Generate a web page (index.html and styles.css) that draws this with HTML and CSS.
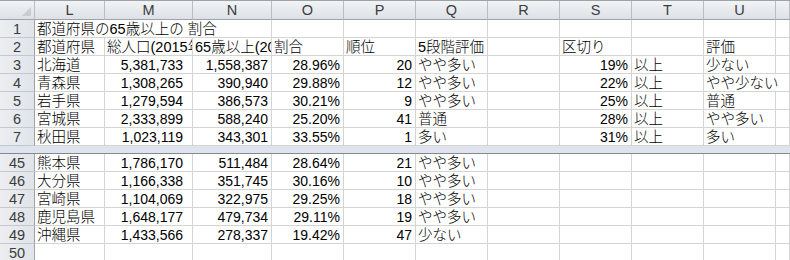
FILE: index.html
```html
<!DOCTYPE html>
<html>
<head>
<meta charset="utf-8">
<title>都道府県の65歳以上の割合</title>
<link rel="stylesheet" href="styles.css">
</head>
<body>
<div class="sheet">

  <!-- column letters -->
  <div class="grid cols">
    <div class="corner"><svg width="9" height="9" viewBox="0 0 9 9"><polygon points="9,0 9,9 0,9" fill="#c9ccd1"/></svg></div>
    <div class="ch">L</div><div class="ch">M</div><div class="ch">N</div><div class="ch">O</div><div class="ch">P</div>
    <div class="ch">Q</div><div class="ch">R</div><div class="ch">S</div><div class="ch">T</div><div class="ch">U</div><div class="ch"></div>
  </div>

  <!-- upper pane: rows 1-7 -->
  <div class="grid">
    <div class="rh">1</div>
    <div class="span3">都道府県の65歳以上の 割合</div>
    <div></div><div></div><div></div><div></div><div></div><div></div><div></div><div></div>

    <div class="rh">2</div>
    <div>都道府県</div><div class="clip">総人口(2015年)</div><div class="clip">65歳以上(2015年)</div><div>割合</div><div>順位</div>
    <div>5段階評価</div><div></div><div>区切り</div><div></div><div>評価</div><div></div>

    <div class="rh">3</div>
    <div>北海道</div><div class="n m">5,381,733</div><div class="n">1,558,387</div><div class="n">28.96%</div><div class="n">20</div>
    <div>やや多い</div><div></div><div class="n">19%</div><div>以上</div><div>少ない</div><div></div>

    <div class="rh">4</div>
    <div>青森県</div><div class="n m">1,308,265</div><div class="n">390,940</div><div class="n">29.88%</div><div class="n">12</div>
    <div>やや多い</div><div></div><div class="n">22%</div><div>以上</div><div class="span2">やや少ない</div>

    <div class="rh">5</div>
    <div>岩手県</div><div class="n m">1,279,594</div><div class="n">386,573</div><div class="n">30.21%</div><div class="n">9</div>
    <div>やや多い</div><div></div><div class="n">25%</div><div>以上</div><div>普通</div><div></div>

    <div class="rh">6</div>
    <div>宮城県</div><div class="n m">2,333,899</div><div class="n">588,240</div><div class="n">25.20%</div><div class="n">41</div>
    <div>普通</div><div></div><div class="n">28%</div><div>以上</div><div>やや多い</div><div></div>

    <div class="rh">7</div>
    <div>秋田県</div><div class="n m">1,023,119</div><div class="n">343,301</div><div class="n">33.55%</div><div class="n">1</div>
    <div>多い</div><div></div><div class="n">31%</div><div>以上</div><div>多い</div><div></div>
  </div>

  <div class="split"></div>

  <!-- lower pane: rows 45-50 -->
  <div class="grid">
    <div class="rh">45</div>
    <div>熊本県</div><div class="n m">1,786,170</div><div class="n">511,484</div><div class="n">28.64%</div><div class="n">21</div>
    <div>やや多い</div><div></div><div></div><div></div><div></div><div></div>

    <div class="rh">46</div>
    <div>大分県</div><div class="n m">1,166,338</div><div class="n">351,745</div><div class="n">30.16%</div><div class="n">10</div>
    <div>やや多い</div><div></div><div></div><div></div><div></div><div></div>

    <div class="rh">47</div>
    <div>宮崎県</div><div class="n m">1,104,069</div><div class="n">322,975</div><div class="n">29.25%</div><div class="n">18</div>
    <div>やや多い</div><div></div><div></div><div></div><div></div><div></div>

    <div class="rh">48</div>
    <div>鹿児島県</div><div class="n m">1,648,177</div><div class="n">479,734</div><div class="n">29.11%</div><div class="n">19</div>
    <div>やや多い</div><div></div><div></div><div></div><div></div><div></div>

    <div class="rh">49</div>
    <div>沖縄県</div><div class="n m">1,433,566</div><div class="n">278,337</div><div class="n">19.42%</div><div class="n">47</div>
    <div>少ない</div><div></div><div></div><div></div><div></div><div></div>

    <div class="rh">50</div>
    <div></div><div></div><div></div><div></div><div></div>
    <div></div><div></div><div></div><div></div><div></div><div></div>
  </div>

</div>
</body>
</html>
```

FILE: styles.css
```css
body {
  margin: 0;
  background: #fff;
}

.sheet {
  width: 790px;
  height: 260px;
  overflow: hidden;
  border-top: 1px solid #9ea3aa;
  font-family: "Liberation Sans", "Noto Sans CJK JP", sans-serif;
  font-size: 14.5px;
  font-weight: 300;
  color: #000;
}

.grid {
  display: grid;
  grid-template-columns: 35px 70px 88px 79px repeat(7, 72px) 14px;
  grid-auto-rows: 18px;
}

.grid > div {
  box-sizing: border-box;
  border-right: 1px solid #d4d4d4;
  border-bottom: 1px solid #d4d4d4;
  padding: 0 2px;
  line-height: 18px;
  white-space: nowrap;
}

.grid > .clip {
  overflow: hidden;
}

/* headers */
.cols {
  grid-auto-rows: 19px;
}

.cols > div {
  background: linear-gradient(#f1f3f5, #dde1e6);
  border-right: 1px solid #b9bec5;
  border-bottom: 1px solid #9ea3aa;
  line-height: 19px;
}

.ch {
  text-align: center;
  color: #3c3c3c;
}

.corner {
  display: flex;
  justify-content: flex-end;
  align-items: flex-end;
  padding: 0 3px 3px 0 !important;
}

.grid > .rh {
  background: linear-gradient(90deg, #eceef1, #e0e4e9);
  border-right: 1px solid #9ea3aa;
  border-bottom: 1px solid #c3c8ce;
  text-align: center;
  color: #3c3c3c;
}

/* cells */
.grid > .n {
  text-align: right;
  padding-right: 3px;
  font-size: 14px;
}

.grid > .m {
  padding-right: 9px;
}

.span3 {
  grid-column: span 3;
}

.span2 {
  grid-column: span 2;
}

/* pane splitter */
.split {
  height: 8px;
  box-sizing: border-box;
  background: #dfe3ed;
  border-bottom: 1px solid #848890;
}
```
